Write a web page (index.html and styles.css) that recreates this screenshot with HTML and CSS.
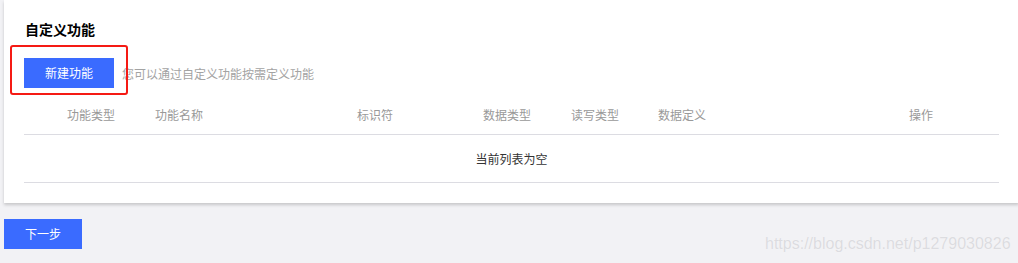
FILE: index.html
```html
<!DOCTYPE html>
<html lang="zh">
<head>
<meta charset="utf-8">
<link rel="stylesheet" href="styles.css">
</head>
<body>
<div class="page">
  <section class="card">
    <h2 class="title">自定义功能</h2>
    <div class="toolbar">
      <span class="btn-wrap">
        <button class="btn">新建功能</button>
        <span class="mark"></span>
      </span>
      <span class="hint">您可以通过自定义功能按需定义功能</span>
    </div>
    <div class="table">
      <div class="row head">
        <div class="cell"></div>
        <div class="cell">功能类型</div>
        <div class="cell">功能名称</div>
        <div class="cell">标识符</div>
        <div class="cell">数据类型</div>
        <div class="cell">读写类型</div>
        <div class="cell">数据定义</div>
        <div class="cell">操作</div>
      </div>
      <div class="empty">当前列表为空</div>
    </div>
  </section>
  <div class="footer">
    <button class="btn next">下一步</button>
  </div>
  <span class="watermark">https://blog.csdn.net/p1279030826</span>
</div>
</body>
</html>
```
FILE: styles.css
```css
html, body {
  margin: 0;
  padding: 0;
  background: #f2f2f5;
  overflow: hidden;
  font-family: "Noto Sans CJK SC", "Noto Sans", sans-serif;
}
.page {
  position: relative;
  width: 1018px;
  height: 263px;
  padding-left: 4px;
  box-sizing: border-box;
}
.card {
  width: 1015px;
  box-sizing: border-box;
  background: #fff;
  padding: 19px 20px 20px 20px;
  box-shadow: 0 2px 3px rgba(0, 0, 0, 0.18);
}
.title {
  margin: 0 0 0 1px;
  font-size: 14px;
  line-height: 20px;
  font-weight: bold;
  color: #000;
}
.toolbar {
  display: flex;
  align-items: center;
  margin-top: 19px;
  height: 30px;
}
.btn-wrap {
  position: relative;
  display: inline-flex;
}
.btn {
  border: none;
  background: #3a6bff;
  color: #fff;
  font-family: inherit;
  font-size: 12px;
  padding: 0;
  width: 90px;
  height: 30px;
  line-height: 30px;
  cursor: pointer;
}
.mark {
  position: absolute;
  left: -14px;
  top: -13px;
  width: 118px;
  height: 50px;
  box-sizing: border-box;
  border: 2.5px solid #f51a14;
  border-radius: 3px;
  pointer-events: none;
}
.hint {
  margin-left: 8px;
  font-size: 12px;
  color: #a3a3a3;
}
.table {
  margin-top: 6px;
}
.row {
  display: grid;
  grid-template-columns: 23px 88px 202px 126px 88px 87px 251px 110px;
}
.head {
  height: 40px;
  align-items: center;
  border-bottom: 1px solid #dcdce2;
}
.cell {
  padding-left: 20px;
  font-size: 12px;
  color: #999;
  white-space: nowrap;
}
.cell:first-child {
  padding-left: 0;
}
.empty {
  height: 47px;
  line-height: 47px;
  text-align: center;
  font-size: 12px;
  color: #333;
  border-bottom: 1px solid #dcdce2;
}
.footer {
  margin-top: 16px;
}
.next {
  width: 78px;
}
.watermark {
  position: absolute;
  left: 765px;
  top: 235px;
  font-family: "Liberation Sans", Arial, sans-serif;
  font-size: 16px;
  color: #dcdce0;
  text-shadow: 0 0 1px rgba(255, 255, 255, 0.8);
  white-space: nowrap;
}
```
